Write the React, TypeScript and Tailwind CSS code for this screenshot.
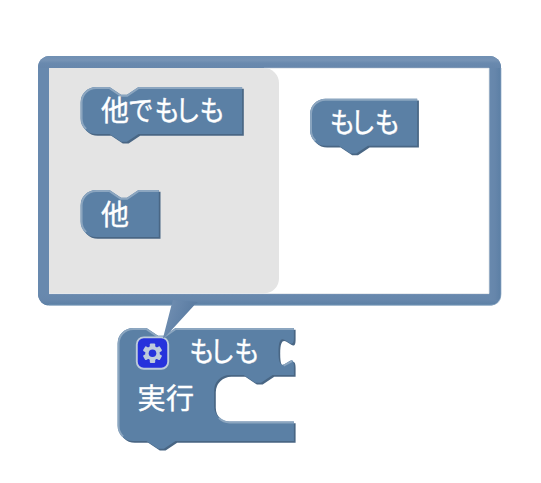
import React from 'react';

const labelClass =
  "fill-white stroke-white stroke-[0.4px] text-[28px] font-normal [font-family:'Noto_Sans_CJK_JP',sans-serif]";

const NOTCH = 'H28.9 l11.6,7.8 5.8,0 11.6,-7.8';
const TAIL = 'H57.9 l-11.6,7.8 -5.8,0 -11.6,-7.8';
const BODY = 'H15.5 a15.5,15.5 0 0 1 -15.5,-15.5 V15.5 a15.5,15.5 0 0 1 15.5,-15.5 Z';
const TOP_LEFT = 'M5.5,42 A14.5,14.5 0 0 1 1,31.5 V15.5 A14.5,14.5 0 0 1 15.5,1';
const LIGHT_NOTCH = 'H28.6 l11.6,7.8 6.4,0 11.6,-7.8';

interface ShapeProps {
  x: number;
  y: number;
  path: string;
  light: string;
  children: React.ReactNode;
}

function Block({ x, y, path, light, children }: ShapeProps) {
  return (
    <g transform={`translate(${x} ${y})`}>
      <path d={path} transform="translate(1.7 1.8)" fill="#496684" />
      <path d={path} fill="#5b80a5" />
      <path d={light} fill="none" stroke="#8ca6c0" strokeWidth="1.9" />
      {children}
    </g>
  );
}

interface LabelProps {
  x: number;
  y: number;
  // Start of each glyph, measured from x before the horizontal scale.
  steps?: string;
  narrow?: boolean;
  children: string;
}

function Label({ x, y, steps = '0', narrow = false, children }: LabelProps) {
  return (
    <text
      x={steps}
      transform={`translate(${x} ${y}) scale(${narrow ? 0.91 : 1} ${narrow ? 1.03 : 1})`}
      className={labelClass}
      style={{ fontFeatureSettings: '"palt"' }}
    >
      {children}
    </text>
  );
}

function Gear() {
  return (
    <g transform="translate(136.8 337.4)">
      <rect x="0" y="0" width="31.4" height="31.4" rx="7" fill="#2632dc" stroke="#bdcbdc" strokeWidth="1.9" />
      <g transform="translate(15.7 15.8)">
        <g fill="#becbdc">
          {[0, 60, 120].map((angle) => (
            <rect key={angle} x="-2.7" y="-9.7" width="5.4" height="19.4" rx="1" transform={`rotate(${angle})`} />
          ))}
          <circle r="7.2" />
        </g>
        <circle r="3.8" fill="#2632dc" />
      </g>
    </g>
  );
}

export default function App() {
  return (
    <main className="h-[483px] w-[541px] overflow-hidden bg-white">
      <svg width="541" height="483" viewBox="0 0 541 483" className="block">
        <defs>
          <linearGradient id="topEdge" x1="0" y1="0" x2="0" y2="1">
            <stop offset="0" stopColor="#7090b3" />
            <stop offset="0.35" stopColor="#7693b5" />
            <stop offset="0.6" stopColor="#6989ae" />
            <stop offset="1" stopColor="#6787ac" />
          </linearGradient>
          <linearGradient id="bottomEdge" x1="0" y1="0" x2="0" y2="1">
            <stop offset="0" stopColor="#6889ae" />
            <stop offset="0.5" stopColor="#6787ac" />
            <stop offset="1" stopColor="#5b80a5" />
          </linearGradient>
          <linearGradient id="rightEdge">
            <stop offset="0" stopColor="#6889ae" />
            <stop offset="0.5" stopColor="#6686ab" />
            <stop offset="1" stopColor="#5b7fa5" />
          </linearGradient>
          <linearGradient id="pointer" x1="0" y1="0" x2="1" y2="0.4">
            <stop offset="0" stopColor="#7592b4" />
            <stop offset="0.5" stopColor="#6585aa" />
            <stop offset="1" stopColor="#56789e" />
          </linearGradient>
          <clipPath id="frame">
            <rect x="38" y="56" width="463" height="249.5" rx="11.5" />
          </clipPath>
        </defs>

        <Block
          x={117.6}
          y={328}
          path={`M15.5,0 ${NOTCH} H176.3 v9.6 c0,19.2 -15.4,-15.4 -15.4,14.4 s15.4,-4.8 15.4,14.4 V47 H155 l-11.6,7.8 -5.8,0 -11.6,-7.8 h-14 a15.5,15.5 0 0 0 -15.5,15.5 V78 a15.5,15.5 0 0 0 15.5,15.5 H176.3 V113 ${TAIL} ${BODY}`}
          light={`M5.5,108.5 A14.5,14.5 0 0 1 1,98 V15.5 A14.5,14.5 0 0 1 15.5,1 ${LIGHT_NOTCH} H176.3 M166,37.6 L174.5,33.2 M101.3,90 A16.5,16.5 0 0 0 112,94.5 H176.3`}
        >
          <Label x={71.8} y={33.5} steps="0 24.4 49.4" narrow>もしも</Label>
          <Label x={20} y={81.3} steps="0 28.3">実行</Label>
        </Block>
        <Gear />

        <g clipPath="url(#frame)">
          <rect x="38" y="56" width="463" height="249.5" fill="#6889ae" />
          <rect x="38" y="56" width="463" height="12" fill="url(#topEdge)" />
          <rect x="38" y="294" width="463" height="11.5" fill="url(#bottomEdge)" />
          <rect x="489" y="68" width="12" height="232" fill="url(#rightEdge)" />
        </g>
        <path d="M173,300 L171.5,305 L163,338 Q164,338.8 167,335 L194.5,305 L198,302 Z" fill="url(#pointer)" />
        <path d="M49,305.2 H171.5 M194.5,305.2 H490 Q501,305 501,294 V68" fill="none" stroke="#8eabc6" strokeWidth="0.7" />
        <rect x="49" y="68" width="440" height="226" fill="white" />
        <path d="M49,68 H264 a15,15 0 0 1 15,15 V278.5 a15,15 0 0 1 -15,15 H49 Z" fill="#e4e4e4" />
        <path d="M264,68.3 H489 M49,293.6 H489 V68" fill="none" stroke="#dfe5e8" strokeWidth="0.8" />

        <Block
          x={80.6}
          y={87}
          path={`M15.5,0 ${NOTCH} H161.5 V47 ${TAIL} ${BODY}`}
          light={`${TOP_LEFT} ${LIGHT_NOTCH} H161.5`}
        >
          <Label x={20.3} y={34.2}>他</Label>
          <Label x={48.3} y={34.2} steps="0 28.4 52.8 77.8" narrow>でもしも</Label>
        </Block>
        <Block
          x={80.6}
          y={190}
          path={`M15.5,0 ${NOTCH} H78.2 V47 ${BODY}`}
          light={`${TOP_LEFT} ${LIGHT_NOTCH} H78.2`}
        >
          <Label x={20.3} y={34.5}>他</Label>
        </Block>
        <Block
          x={310}
          y={98.7}
          path={`M15.5,0 H107.2 V47 ${TAIL} ${BODY}`}
          light={`${TOP_LEFT} H107.2`}
        >
          <Label x={20} y={34} steps="0 24.4 49.4" narrow>もしも</Label>
        </Block>
      </svg>
    </main>
  );
}
